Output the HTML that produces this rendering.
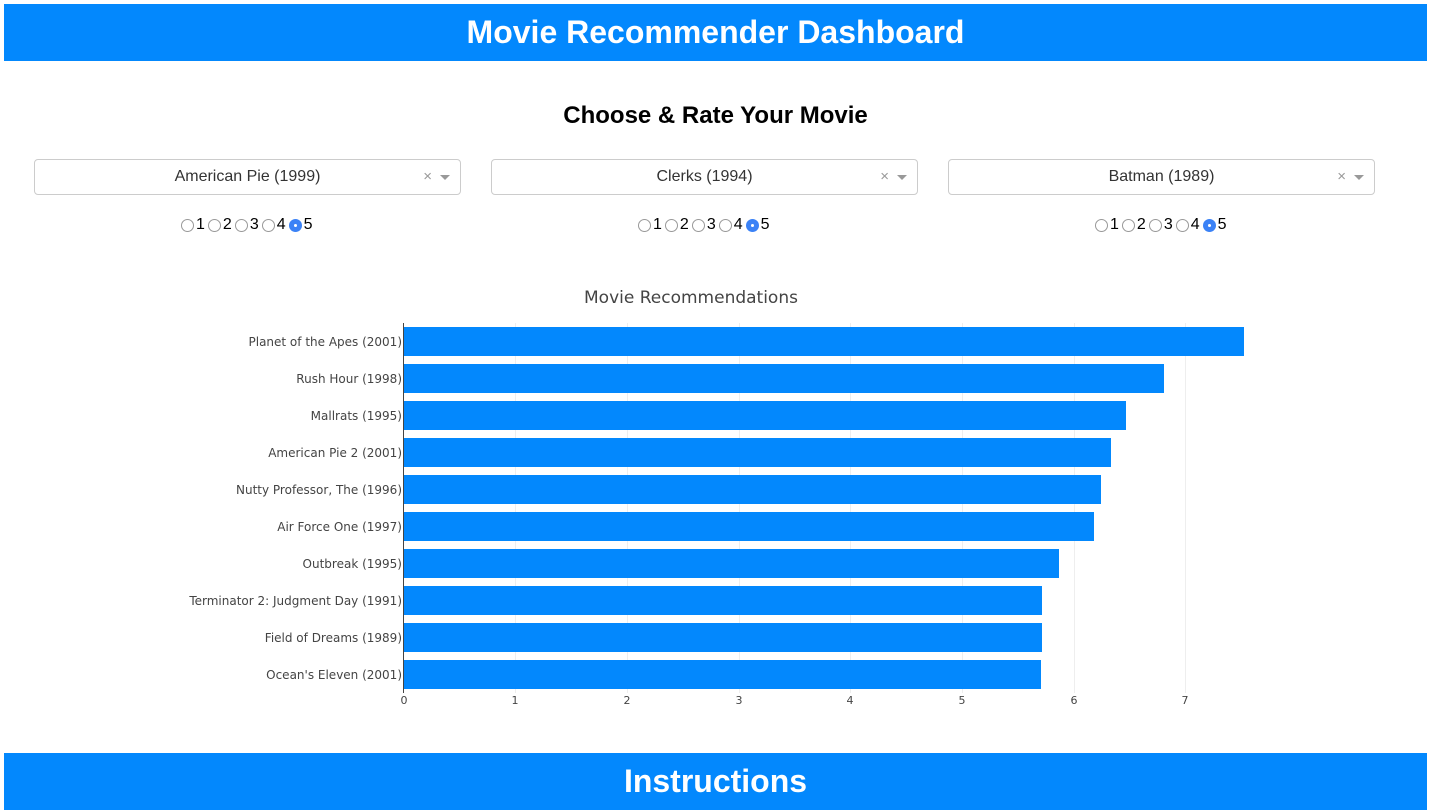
<!DOCTYPE html>
<html><head><style>
body{margin:0;width:1431px;height:810px;background:#fff;font-family:"Liberation Sans",Arial,sans-serif;position:relative;overflow:hidden}
.bar{position:absolute;left:4px;width:1423px;background:#0388fd;color:#fff;font-weight:bold;font-size:32px;text-align:center}
.h2{position:absolute;top:102px;left:0;width:1431px;text-align:center;font-size:24px;font-weight:bold}
.dd{position:absolute;top:159px;width:425px;height:34px;border:1px solid #ccc;border-radius:4px;font-size:16px;color:#333;text-align:center;line-height:34px}
.dd .x{position:absolute;right:28px;top:0;color:#999;font-size:15px}
.dd .a{position:absolute;right:10px;top:15px;border:5px solid transparent;border-top:5px solid #999;border-bottom:none}
.radios{position:absolute;top:216px;font-size:16px;display:flex;align-items:center;font-family:"Liberation Sans",sans-serif}
.r{width:13px;height:13px;border:1px solid #999;border-radius:50%;display:inline-block;box-sizing:border-box;margin:0 2px 0 3px;position:relative}
.r:first-child{margin-left:0}
.r.on{background:#3b82f6;border-color:#3b82f6}
.r.on:after{content:"";position:absolute;left:4px;top:4px;width:3px;height:3px;background:#fff;border-radius:50%}
.lbl{position:absolute;right:1029px;font-size:12px;color:#444;font-family:"DejaVu Sans",sans-serif;transform:translateY(-50%)}
.b{position:absolute;left:404px;height:29px;background:#0388fd}
.g{position:absolute;top:323px;height:370px;width:1px;background:#eee}
.t{position:absolute;top:694px;font-size:11px;color:#444;font-family:"DejaVu Sans",sans-serif;transform:translateX(-50%)}
</style></head><body>
<div class="bar" style="top:4px;height:57px;line-height:57px">Movie Recommender Dashboard</div>
<div class="h2">Choose &amp; Rate Your Movie</div>
<div class="dd" style="left:34px">American Pie (1999)<span class="x">×</span><span class="a"></span></div>
<div class="dd" style="left:491px">Clerks (1994)<span class="x">×</span><span class="a"></span></div>
<div class="dd" style="left:948px">Batman (1989)<span class="x">×</span><span class="a"></span></div>
<div class="radios" style="left:181px"><span class="r"></span>1<span class="r"></span>2<span class="r"></span>3<span class="r"></span>4<span class="r on"></span>5</div>
<div class="radios" style="left:638px"><span class="r"></span>1<span class="r"></span>2<span class="r"></span>3<span class="r"></span>4<span class="r on"></span>5</div>
<div class="radios" style="left:1095px"><span class="r"></span>1<span class="r"></span>2<span class="r"></span>3<span class="r"></span>4<span class="r on"></span>5</div>
<div style="position:absolute;top:288px;left:0;width:1382px;text-align:center;font-size:17px;color:#444;font-family:'DejaVu Sans',sans-serif">Movie Recommendations</div>
<div class="g" style="left:515px"></div><div class="g" style="left:627px"></div><div class="g" style="left:739px"></div><div class="g" style="left:850px"></div><div class="g" style="left:962px"></div><div class="g" style="left:1074px"></div><div class="g" style="left:1185px"></div>
<div style="position:absolute;left:403px;top:323px;width:1px;height:370px;background:#444"></div>
<div class="b" style="top:327px;width:840px"></div>
<div class="b" style="top:364px;width:760px"></div>
<div class="b" style="top:401px;width:722px"></div>
<div class="b" style="top:438px;width:707px"></div>
<div class="b" style="top:475px;width:697px"></div>
<div class="b" style="top:512px;width:690px"></div>
<div class="b" style="top:549px;width:655px"></div>
<div class="b" style="top:586px;width:638px"></div>
<div class="b" style="top:623px;width:638px"></div>
<div class="b" style="top:660px;width:637px"></div>
<div class="lbl" style="top:342px">Planet of the Apes (2001)</div>
<div class="lbl" style="top:379px">Rush Hour (1998)</div>
<div class="lbl" style="top:416px">Mallrats (1995)</div>
<div class="lbl" style="top:453px">American Pie 2 (2001)</div>
<div class="lbl" style="top:490px">Nutty Professor, The (1996)</div>
<div class="lbl" style="top:527px">Air Force One (1997)</div>
<div class="lbl" style="top:564px">Outbreak (1995)</div>
<div class="lbl" style="top:601px">Terminator 2: Judgment Day (1991)</div>
<div class="lbl" style="top:638px">Field of Dreams (1989)</div>
<div class="lbl" style="top:675px">Ocean's Eleven (2001)</div>
<div class="t" style="left:404px">0</div><div class="t" style="left:515px">1</div><div class="t" style="left:627px">2</div><div class="t" style="left:739px">3</div><div class="t" style="left:850px">4</div><div class="t" style="left:962px">5</div><div class="t" style="left:1074px">6</div><div class="t" style="left:1185px">7</div>
<div class="bar" style="top:753px;height:57px;line-height:57px">Instructions</div>
</body></html>
